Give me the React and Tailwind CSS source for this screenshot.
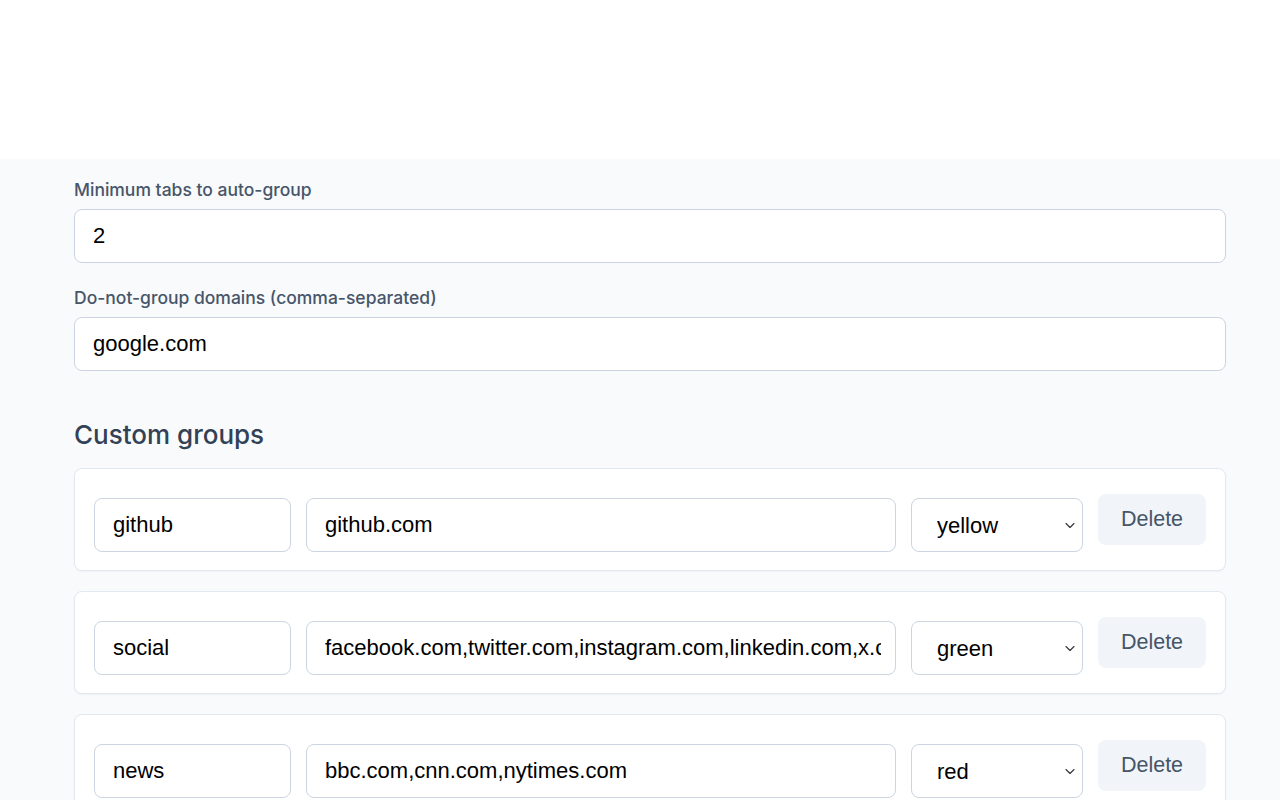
import React from "react";

const inputCls =
  "block h-[54px] rounded-lg border border-[#cbd5e1] bg-white px-[18px] text-[22px] text-black outline-none";

function Chevron() {
  return (
    <svg width="12" height="12" viewBox="0 0 12 12" className="pointer-events-none absolute right-[7px] top-1/2 -translate-y-1/2">
      <path d="M2 4.5l4 4 4-4" fill="none" stroke="#333" strokeWidth="1.1" strokeLinecap="round" strokeLinejoin="round" />
    </svg>
  );
}

function GroupRow({ name, domains, color }) {
  return (
    <div className="flex items-start gap-[15px] rounded-lg border border-[#e2e8f0] bg-white px-[19px] pt-[19px] pb-[18px] shadow-[0_1px_2px_rgba(15,23,42,0.04)]">
      <input readOnly value={name} className={inputCls + " mt-[10px] w-[197px] shrink-0"} />
      <input readOnly value={domains} className={inputCls + " mt-[10px] min-w-0 flex-1 pr-[14px]"} />
      <div className="relative mt-[10px] w-[172px] shrink-0">
        <select
          value={color}
          onChange={() => {}}
          className="block h-[54px] w-full appearance-none rounded-lg border border-[#cbd5e1] bg-white pl-[25px] pr-8 text-[22px] text-black outline-none"
          style={{ fontFamily: "'Liberation Sans', Arial, sans-serif" }}
        >
          <option>{color}</option>
        </select>
        <Chevron />
      </div>
      <button className="mt-[6px] h-[51px] w-[108px] shrink-0 rounded-lg bg-[#f1f5f9] text-[21.5px] text-[#475569]">
        Delete
      </button>
    </div>
  );
}

export default function App() {
  return (
    <div className="min-h-[800px] bg-white" style={{ fontFamily: "'Liberation Sans', Arial, sans-serif" }}>
      <div className="h-[159px] bg-white" />
      <div className="min-h-[641px] bg-[#f8fafc] pl-[74px] pr-[54px] pt-[19px] pb-[40px]">
        <div className="flex flex-col">
          <label className="text-[17.5px] font-medium leading-[24px] text-[#475569]" style={{ fontFamily: "Inter, sans-serif" }}>
            Minimum tabs to auto-group
          </label>
          <input readOnly value="2" className={inputCls + " mt-[7px] w-full"} />
          <label className="mt-[23px] text-[17.5px] font-medium leading-[24px] text-[#475569]" style={{ fontFamily: "Inter, sans-serif" }}>
            Do-not-group domains (comma-separated)
          </label>
          <input readOnly value="google.com" className={inputCls + " mt-[7px] w-full"} />
          <h2 className="mt-[47px] text-[26px] font-medium leading-[34px] text-[#334155]" style={{ fontFamily: "Inter, sans-serif" }}>
            Custom groups
          </h2>
          <div className="mt-[16px] flex flex-col gap-[20px]">
            <GroupRow name="github" domains="github.com" color="yellow" />
            <GroupRow name="social" domains="facebook.com,twitter.com,instagram.com,linkedin.com,x.com" color="green" />
            <GroupRow name="news" domains="bbc.com,cnn.com,nytimes.com" color="red" />
          </div>
        </div>
      </div>
    </div>
  );
}
